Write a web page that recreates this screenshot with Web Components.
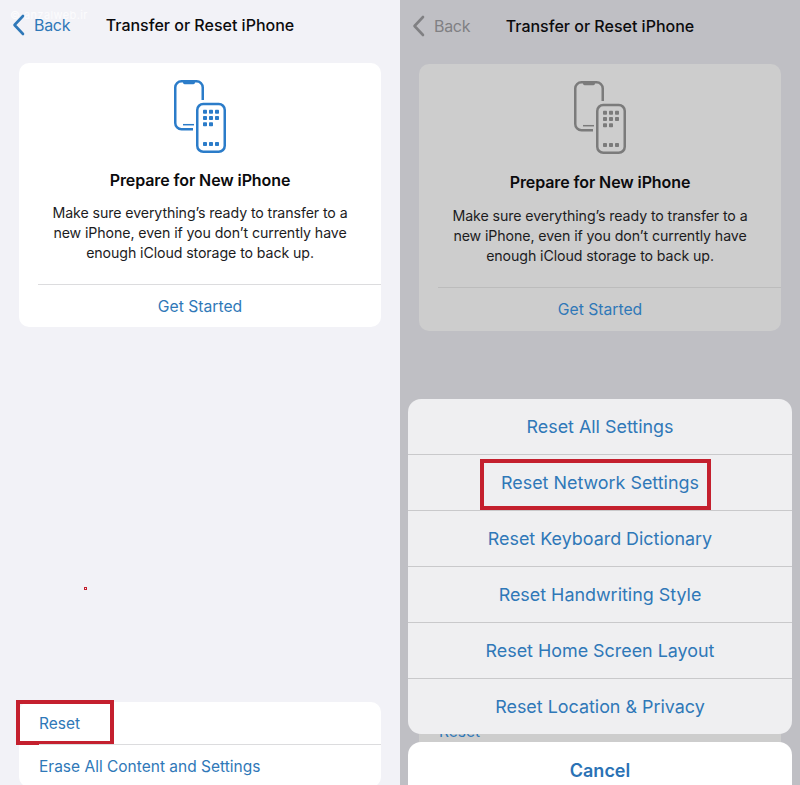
<!DOCTYPE html>
<html lang="en">
<head>
<meta charset="utf-8">
<title>Transfer or Reset iPhone</title>
<style>
  html, body { margin: 0; padding: 0; background: #f2f2f7; }
  body {
    width: 800px;
    height: 785px;
    overflow: hidden;
    display: flex;
    font-family: Inter, "Liberation Sans", sans-serif;
    color: #0b0b0d;
  }
  .dim {
    --screen-bg: #bfbfc4;
    --card-bg: #cdcdcd;
    --line: #bcbcbc;
    --nav-tint: #808083;
    --icon-tint: #7b7b7b;
    --title-gap: 18px;
    --text-gap: 14px;
    --action-height: 43px;
  }
</style>
</head>
<body>
<ios-screen>
  <nav-bar></nav-bar>
  <prepare-card style="margin-top:13px"></prepare-card>
  <settings-group style="margin-top:375px">
    <group-row>Reset<red-mark style="left:-23px;top:-2px;width:90px;height:37px"></red-mark></group-row>
    <group-row>Erase All Content and Settings</group-row>
  </settings-group>
  <water-mark>© anzalweb.ir</water-mark>
  <red-mark style="left:84px;top:587px;width:1px;height:1px;border-width:1.5px"></red-mark>
</ios-screen>

<ios-screen class="dim">
  <nav-bar style="margin-top:1px"></nav-bar>
  <prepare-card style="margin-top:13px"></prepare-card>
  <settings-group style="margin-top:379px">
    <group-row>Reset</group-row>
  </settings-group>
  <action-sheet>
    <sheet-row>Reset All Settings</sheet-row>
    <sheet-row>Reset Network Settings<red-mark style="left:72px;top:4px;width:223px;height:43px"></red-mark></sheet-row>
    <sheet-row>Reset Keyboard Dictionary</sheet-row>
    <sheet-row>Reset Handwriting Style</sheet-row>
    <sheet-row>Reset Home Screen Layout</sheet-row>
    <sheet-row>Reset Location &amp; Privacy</sheet-row>
    <cancel-button slot="cancel">Cancel</cancel-button>
  </action-sheet>
</ios-screen>

<script>
// small helper, every element just gets a template string
function define(name, html) {
  customElements.define(name, class extends HTMLElement {
    constructor() {
      super();
      this.attachShadow({ mode: 'open' }).innerHTML = html;
    }
  });
}

define('ios-screen', `
  <style>
    :host {
      display: flex;
      flex-direction: column;
      position: relative;
      width: 400px;
      height: 785px;
      overflow: hidden;
      background: var(--screen-bg, #f2f2f7);
    }
  </style>
  <slot></slot>`);

define('nav-bar', `
  <style>
    :host {
      display: grid;
      grid-template-columns: 1fr auto 1fr;
      align-items: center;
      height: 50px;
      flex: none;
    }
    .back {
      display: flex;
      align-items: center;
      gap: 9px;
      padding-left: 12px;
      font-size: 16px;
      letter-spacing: -0.3px;
      color: var(--nav-tint, #2f78b8);
    }
    svg { display: block; }
    .title { font-size: 16px; font-weight: 500; }
  </style>
  <div class="back">
    <svg width="13" height="22" viewBox="0 0 13 22" fill="none" stroke="currentColor" stroke-width="2.6" stroke-linecap="round" stroke-linejoin="round"><path d="M11 2 L2.5 11 L11 20"/></svg>
    <span>Back</span>
  </div>
  <div class="title">Transfer or Reset iPhone</div>
  <div></div>`);

define('phones-icon', `
  <style>
    :host { display: block; width: 52px; height: 73px; color: var(--icon-tint, #2b7cc9); }
    svg { display: block; }
  </style>
  <svg width="52" height="73" viewBox="0 0 52 73" fill="none" stroke="currentColor" stroke-width="2.5">
    <path d="M28.75 20 V7.5 A6.25 6.25 0 0 0 22.5 1.25 H7.5 A6.25 6.25 0 0 0 1.25 7.5 V43 A6.25 6.25 0 0 0 7.5 49.25 H19"/>
    <path d="M9 1 H21 V2.6 A1.6 1.6 0 0 1 19.4 4.2 H10.6 A1.6 1.6 0 0 1 9 2.6 Z" fill="currentColor" stroke="none"/>
    <path d="M9 44.7 H20" stroke-width="1.5"/>
    <rect x="23.25" y="24" width="27.5" height="47.75" rx="6"/>
    <g fill="currentColor" stroke="none">
      <rect x="29" y="29.7" width="4" height="4" rx=".8"/><rect x="35" y="29.7" width="4" height="4" rx=".8"/><rect x="41" y="29.7" width="4" height="4" rx=".8"/>
      <rect x="29" y="36" width="4" height="4" rx=".8"/><rect x="35" y="36" width="4" height="4" rx=".8"/><rect x="41" y="36" width="4" height="4" rx=".8"/>
      <rect x="29" y="42.3" width="4" height="4" rx=".8"/><rect x="35" y="42.3" width="4" height="4" rx=".8"/>
      <rect x="29" y="62" width="4" height="4" rx=".8"/><rect x="35" y="62" width="4" height="4" rx=".8"/><rect x="41" y="62" width="4" height="4" rx=".8"/>
    </g>
  </svg>`);

define('prepare-card', `
  <style>
    :host {
      display: block;
      flex: none;
      margin: 0 19px;
      border-radius: 10px;
      background: var(--card-bg, #fff);
      text-align: center;
    }
    .top { display: flex; flex-direction: column; align-items: center; padding-top: 17px; }
    h2 { margin: var(--title-gap, 17px) 0 0; font-size: 16px; line-height: 20px; font-weight: 600; letter-spacing: -0.1px; }
    p { margin: var(--text-gap, 13px) 0 0; font-size: 14.2px; line-height: 20px; letter-spacing: -0.1px; color: #1c1c1e; }
    .action {
      margin: 21px 0 0 19px;
      height: var(--action-height, 42px);
      padding-right: 19px;
      display: flex;
      align-items: center;
      justify-content: center;
      border-top: 1px solid var(--line, #dcdcde);
      font-size: 15.7px;
      color: #2f78b8;
    }
  </style>
  <div class="top">
    <phones-icon></phones-icon>
    <h2>Prepare for New iPhone</h2>
    <p>Make sure everything’s ready to transfer to a<br>new iPhone, even if you don’t currently have<br>enough iCloud storage to back up.</p>
  </div>
  <div class="action">Get Started</div>`);

define('settings-group', `
  <style>
    :host {
      display: block;
      flex: none;
      margin: 0 19px;
      border-radius: 10px;
      background: var(--card-bg, #fff);
    }
  </style>
  <slot></slot>`);

define('group-row', `
  <style>
    :host {
      display: flex;
      align-items: center;
      position: relative;
      height: 42px;
      margin-left: 20px;
      font-size: 15.5px;
      color: #2f78b8;
      border-top: 1px solid var(--line, #dcdcde);
    }
    :host(:first-child) { border-top: 0; }
  </style>
  <slot></slot>`);

define('action-sheet', `
  <style>
    :host {
      position: absolute;
      left: 8px;
      right: 8px;
      top: 399px;
      display: flex;
      flex-direction: column;
      gap: 8px;
    }
    .list { border-radius: 13px; background: #efeff1; }
  </style>
  <div class="list"><slot></slot></div>
  <slot name="cancel"></slot>`);

define('sheet-row', `
  <style>
    :host {
      display: flex;
      align-items: center;
      justify-content: center;
      position: relative;
      height: 55px;
      font-size: 17.9px;
      color: #2f78b8;
      border-top: 1px solid #c9c9cb;
    }
    :host(:first-child) { border-top: 0; }
  </style>
  <slot></slot>`);

define('cancel-button', `
  <style>
    :host {
      display: flex;
      align-items: center;
      justify-content: center;
      height: 56px;
      border-radius: 13px;
      background: #fff;
      font-size: 18px;
      font-weight: 600;
      color: #2a72b5;
    }
  </style>
  <slot></slot>`);

define('red-mark', `
  <style>
    :host {
      position: absolute;
      display: block;
      border: 4px solid #c4202e;
      pointer-events: none;
    }
  </style>`);

define('water-mark', `
  <style>
    :host {
      position: absolute;
      left: 10px;
      top: 8px;
      font-size: 11px;
      letter-spacing: 0.4px;
      color: rgba(255,255,255,.75);
    }
  </style>
  <slot></slot>`);
</script>
</body>
</html>
